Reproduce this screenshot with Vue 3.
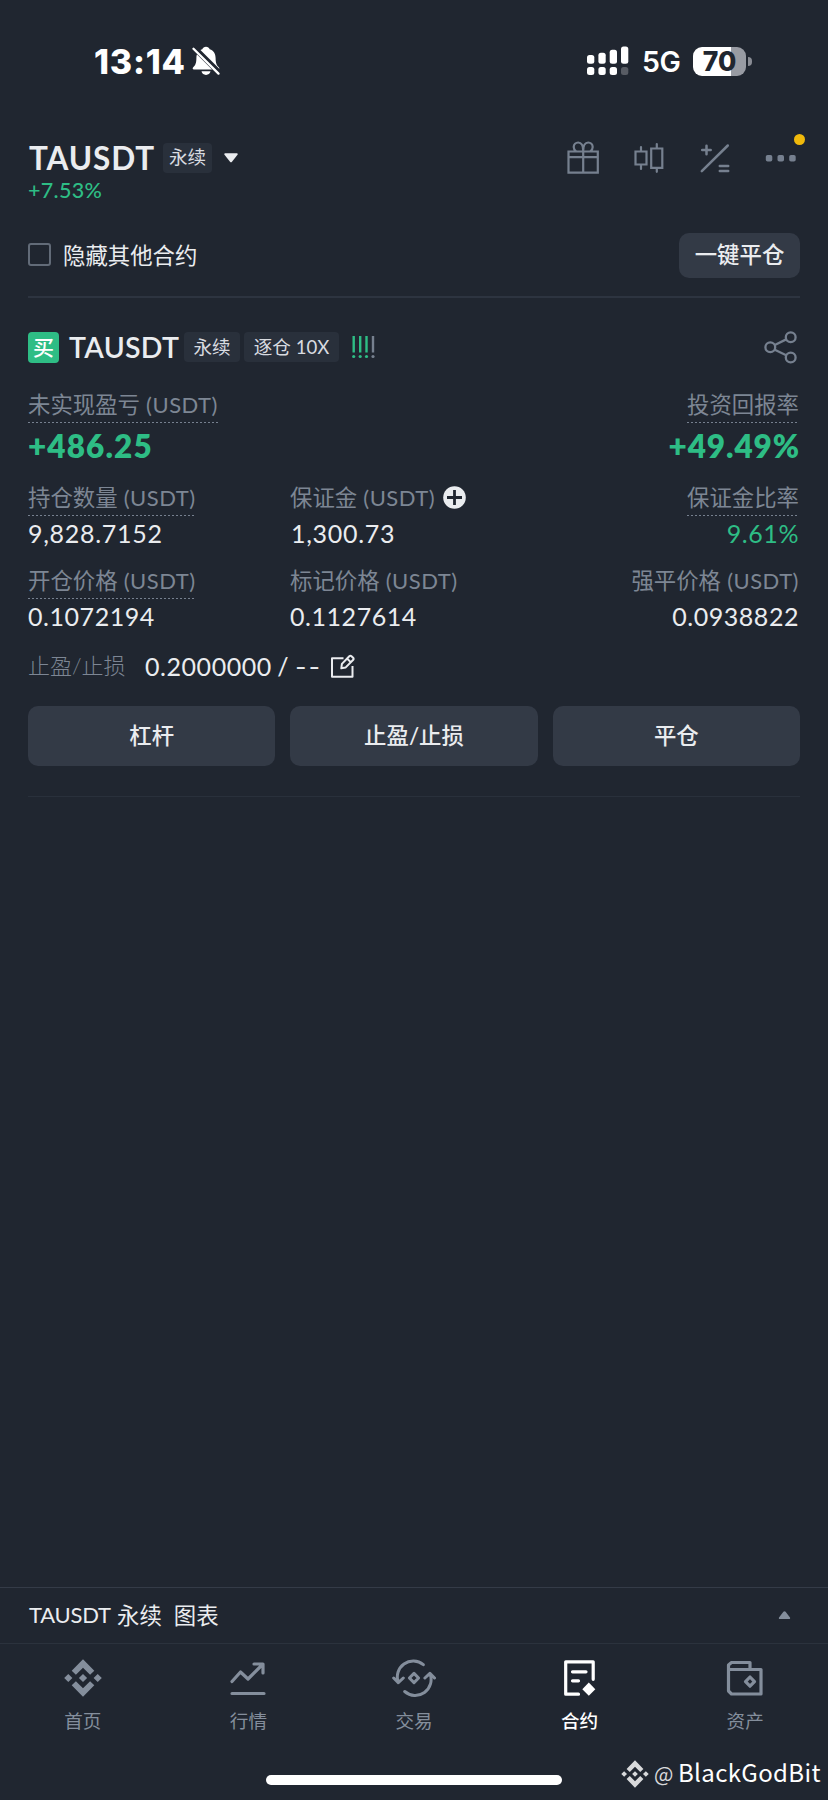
<script setup>
const tabs = [
  { id: 'home', label: '首页' },
  { id: 'market', label: '行情' },
  { id: 'trade', label: '交易' },
  { id: 'futures', label: '合约', active: true },
  { id: 'wallet', label: '资产' },
]
</script>

<template>
  <div class="screen">
    <div class="status">
      <span class="clock">13:14</span>
      <svg class="bell" width="28" height="30" viewBox="0 0 28 30">
        <path d="M14 .8c-1.8 0-3.2 1-3.7 2.500C6.300 4.600 4.400 8 4.400 12c0 5-1.100 7.500-3.200 9.300-.8.700-.9 2.200.8 2.200h24c1.700 0 1.600-1.500.8-2.200-2.100-1.800-3.200-4.300-3.200-9.300 0-4-1.900-7.400-5.900-8.700C17.200 1.800 15.800.8 14 .8z" fill="#fff"/>
        <path d="M9.500 25.300h9c-.4 2.200-2.200 3.600-4.500 3.600s-4.100-1.400-4.500-3.600z" fill="#fff"/>
        <path d="M2.500 2l25 25" stroke="#202630" stroke-width="5.500"/>
        <path d="M1.500 2.800l25 24.800" stroke="#fff" stroke-width="2.300" stroke-linecap="round"/>
      </svg>
      <svg class="signal" width="42" height="30" viewBox="0 0 42 30" fill="#fff">
        <rect x="0" y="9" width="7.300" height="8.800" rx="2.500"/><rect x="11.400" y="6.700" width="7.300" height="11.100" rx="2.500"/>
        <rect x="22.700" y="3.700" width="7.300" height="14.100" rx="2.500"/><rect x="34" y=".5" width="7.300" height="17.300" rx="2.500"/>
        <rect x="0" y="21" width="7.300" height="8" rx="2.500"/><rect x="11.400" y="21" width="7.300" height="8" rx="2.500"/>
        <rect x="22.700" y="21" width="7.300" height="8" rx="2.500"/><rect x="34" y="21" width="7.300" height="8" rx="2.500" opacity=".25"/>
      </svg>
      <span class="net">5G</span>
      <div class="battery"><span>70</span></div>
      <i class="nub"></i>
    </div>

    <header class="head">
      <div class="pair">
        <div class="pair-row">
          <span class="symbol">TAUSDT</span>
          <span class="tag">永续</span>
          <svg class="caret" width="16" height="12" viewBox="0 0 16 12"><path d="M2.200 1.200h11.600c1 0 1.200.8.700 1.500L9 9.800c-.6.700-1.400.7-2 0L1.500 2.700C1 2 1.200 1.200 2.200 1.200z" fill="#eaecef"/></svg>
        </div>
        <div class="change">+7.53%</div>
      </div>
      <svg class="tools" width="232" height="34" viewBox="0 0 232 34" fill="none" stroke="#76808f" stroke-width="2.200">
        <path d="M1.500 11.500h29.300v21.200H1.500zM1.500 17.200h29.300M16.200 11.500v21.200M16.200 10.500c0-5-2-8-5-8a4.600 4.600 0 0 0-4.500 4.500c0 2 1 3.500 2.500 4.500M16.200 10.500c0-5 2-8 5-8A4.600 4.600 0 0 1 25.700 7c0 2-1 3.500-2.500 4.500"/>
        <path d="M68.500 11.500h11v13h-11zM74 7v4.500M74 24.500v4.500M84.200 8.500h11.100v19.300H84.200zM89.800 4v4.500M89.800 27.800v4" stroke-linecap="round"/>
        <path d="M160.800 5.500l-26 25.700M135.200 10h8.500M139.500 5.700v8.600M152.800 26h8.400M152.800 31h8.400" stroke-width="2.500" stroke-linecap="round"/>
        <g fill="#76808f" stroke="none"><rect x="198.800" y="15" width="6.500" height="6.500" rx="1.800"/><rect x="210.500" y="15" width="6.500" height="6.500" rx="1.800"/><rect x="222.200" y="15" width="6.500" height="6.500" rx="1.800"/></g>
      </svg>
      <i class="dot"></i>
    </header>

    <div class="filter">
      <i class="box"></i>
      <span class="hide">隐藏其他合约</span>
      <button class="close-all">一键平仓</button>
    </div>

    <section class="card">
      <div class="title">
        <span class="buy">买</span>
        <span class="name">TAUSDT</span>
        <span class="tag t1">永续</span>
        <span class="tag t2">逐仓 <b>10X</b></span>
        <svg class="risk" width="24" height="24" viewBox="0 0 24 24" fill="#2ebd85">
          <path d="M.5 1h2.400v16.500H.5zM7 1h2.400v16.500H7zM13.300 1h2.400v16.500h-2.400z"/><circle cx="1.700" cy="21.500" r="1.600"/><circle cx="8.200" cy="21.500" r="1.600"/><circle cx="14.500" cy="21.500" r="1.600"/>
          <g fill="#76808f"><path d="M19.800 1h2.400v16.500h-2.400z"/><circle cx="21" cy="21.500" r="1.600"/></g>
        </svg>
        <svg class="share" width="33" height="33" viewBox="0 0 33 33" fill="none" stroke="#76808f" stroke-width="2.300"><circle cx="6.300" cy="16.300" r="4.900"/><circle cx="26.700" cy="6.200" r="4.900"/><circle cx="26.700" cy="26.500" r="4.900"/><path d="M10.800 14l11.400-5.600M10.800 18.700l11.400 5.500"/></svg>
      </div>

      <div class="row pnl">
        <div><div class="label"><u>未实现盈亏<em> (USDT)</em></u></div><div class="big">+486.25</div></div>
        <div class="right"><div class="label"><u>投资回报率</u></div><div class="big roi">+49.49%</div></div>
      </div>
      <div class="row three r2">
        <div><div class="label"><u>持仓数量<em> (USDT)</em></u></div><div class="val v1">9,828.7152</div></div>
        <div><div class="label">保证金<em> (USDT)</em><svg class="plus" width="23" height="23" viewBox="0 0 23 23"><circle cx="11.500" cy="11.500" r="11.300" fill="#eaecef"/><path d="M11.500 4v15M4 11.500h15" stroke="#202630" stroke-width="2.800"/></svg></div><div class="val v2">1,300.73</div></div>
        <div class="right"><div class="label"><u>保证金比率</u></div><div class="val green">9.61%</div></div>
      </div>
      <div class="row three r3">
        <div><div class="label"><u>开仓价格<em> (USDT)</em></u></div><div class="val">0.1072194</div></div>
        <div><div class="label">标记价格<em> (USDT)</em></div><div class="val">0.1127614</div></div>
        <div class="right"><div class="label">强平价格<em> (USDT)</em></div><div class="val">0.0938822</div></div>
      </div>
      <div class="tpsl">
        <span class="label">止盈/止损</span><span class="val tp">0.2000000 / <span class="dash">--</span></span>
        <svg class="edit" width="25" height="25" viewBox="0 0 25 25" fill="none" stroke="#eaecef" stroke-width="2" stroke-linejoin="round"><path d="M13.500 4.200H2v18.500h20.500V12"/><path d="M11.300 14.300l.6-4.400L19.300 2.300c.8-.8 1.500-.8 2.200-.1l1.600 1.600c.7.700.7 1.400-.1 2.200l-7.500 7.600zM17.300 4.700l3.400 3.400"/></svg>
      </div>
      <div class="actions"><button>杠杆</button><button>止盈/止损</button><button>平仓</button></div>
    </section>

    <div class="chart"><span class="cname">TAUSDT</span><span class="cjk">永续</span><span class="cjk ctext">图表</span><svg width="13" height="10" viewBox="0 0 13 10"><path d="M2 9h9c1.200 0 1.500-1 .8-1.800L7.600 1.800c-.7-.8-1.500-.8-2.200 0L1.200 7.200C.5 8 .8 9 2 9z" fill="#848e9c"/></svg></div>

    <nav class="nav">
      <div v-for="t in tabs" :key="t.id" class="tab" :class="{ on: t.active }">
        <svg width="44" height="40" viewBox="-2 0 44 40" fill="none" stroke="currentColor" stroke-width="3.200" stroke-linecap="round" stroke-linejoin="round">
          <g v-if="t.id === 'home'" fill="currentColor" stroke="none"><path d="M20 1.300l11.300 11.400-4.200 4.100L20 9.700l-7.100 7.100-4.200-4.100zM20 38.700L8.700 27.300l4.200-4.100 7.100 7.100 7.100-7.100 4.200 4.100zM20 15.900l4.100 4.100-4.100 4.100-4.100-4.100zM5.300 15.900L9.400 20l-4.100 4.100L1.200 20zM34.700 15.900l4.100 4.100-4.100 4.100-4.100-4.100z"/></g>
          <g v-else-if="t.id === 'market'"><path d="M4 23.500l8.500-9.500 7.500 7L34.500 6.500M26 6h9v9M4 35.500h32"/></g>
          <g v-else-if="t.id === 'trade'" stroke-width="3"><path d="M4.300 24.500A15.900 15.900 0 0 1 29.300 6.700M-.3 20l4.600 4.700 5-4.700M10.700 33.500A15.900 15.900 0 0 0 35.900 15.500M30.900 20l5-4.700 4.600 4.700"/><path d="M20 15.400l4.600 4.600-4.600 4.600-4.600-4.600z"/></g>
          <g v-else-if="t.id === 'futures'"><path d="M18.500 36.200H5.700V3.800h27.500v17.500M12.500 13.800h13.500M12.500 22.800h6"/><path d="M28.800 24.600l6.500 6.700-6.500 6.500-6.500-6.500z" fill="currentColor" stroke="none"/></g>
          <g v-else><path d="M3.500 11v22l3 3h29.500V11.500H3.500V7l3-2.500h18.500v7"/><path d="M25 19l4.500 4.700-4.500 4.500-4.500-4.500z"/></g>
        </svg>
        <span>{{ t.label }}</span>
      </div>
    </nav>
    <div class="home-bar"></div>
    <div class="mark">
      <svg width="28" height="28" viewBox="0 0 40 40" fill="#d8d9db"><path d="M20 .5l12 12.200-4.500 4.400L20 9.700l-7.500 7.400L8 12.700zM20 39.500L8 27.300l4.500-4.400 7.500 7.400 7.500-7.400 4.500 4.400zM20 15.900l4.100 4.100-4.100 4.100-4.100-4.100zM4.500 15.900L8.600 20l-4.100 4.100L.4 20zM35.500 15.900l4.100 4.100-4.100 4.100-4.100-4.100z"/></svg>
      <span class="at">@</span><span class="user">BlackGodBit</span>
    </div>
  </div>
</template>

<style>
body { margin: 0; background: #202630; }
</style>

<style scoped>
* { box-sizing: border-box; }
.screen { position: relative; width: 828px; height: 1800px; overflow: hidden; background: #202630; color: #eaecef; font-family: Lato, "Noto Sans CJK SC", sans-serif; display: flex; flex-direction: column; white-space: nowrap; }
i, em, u, b { font-style: normal; text-decoration: none; font-weight: inherit; }
svg { display: block; flex: none; }
button { border: 0; padding: 0; background: #333a46; color: #eaecef; font: 500 22.400px/1 Lato, "Noto Sans CJK SC", sans-serif; border-radius: 10px; }
.status { height: 122px; display: flex; align-items: center; padding-left: 94px; color: #fff; font-family: Inter, sans-serif; }
.clock { width: 98px; font-size: 34px; font-weight: 800; line-height: 40px; letter-spacing: .8px; padding-top: 1px; }
.signal { margin-left: 367px; }
.net { width: 51px; margin-left: 13px; font-size: 28.500px; font-weight: 600; letter-spacing: -.3px; }
.battery { width: 53px; height: 29px; border-radius: 9px; background: linear-gradient(90deg, #fff 71%, #989ba3 71%); color: #202630; text-align: center; font-size: 26.500px; line-height: 28px; font-weight: 800; }
.nub { width: 4px; height: 9px; margin-left: 2px; border-radius: 0 4px 4px 0; background: #898c94; }
.head { height: 91px; padding: 20px 28px 0; display: flex; justify-content: space-between; position: relative; }
.pair-row { height: 32px; display: flex; align-items: center; }
.symbol { width: 134px; margin-left: 1px; font-size: 31.500px; font-weight: 700; line-height: 38px; letter-spacing: .9px; }
.tag { background: #29303b; border-radius: 4px; height: 30px; line-height: 29px; font-size: 18.600px; text-align: center; color: #d8dbe0; }
.pair .tag { width: 49px; }
.title .tag { line-height: 30px; }
.caret { margin-left: 11px; }
.change { font-size: 21.500px; line-height: 26px; margin-top: 3px; color: #2ebd85; letter-spacing: .3px; font-weight: 500; }
.tools { margin-right: 1px; margin-top: -2px; }
.dot { position: absolute; left: 794px; top: 12px; width: 11px; height: 11px; border-radius: 50%; background: #f0b90b; }
.filter { height: 85px; margin: 0 28px; border-bottom: 2px solid #2d3440; display: flex; align-items: center; }
.box { width: 23px; height: 23px; border: 2px solid #626b78; border-radius: 3px; }
.hide { font-size: 22.400px; margin-left: 12px; padding-bottom: 2px; }
.close-all { width: 121px; height: 45px; margin: 2px 0 0 auto; }
.card { margin: 0 28px; height: 499px; border-bottom: 1px solid #29303b; padding-top: 33px; }
.title { display: flex; align-items: center; height: 32px; }
.buy { width: 31px; height: 31px; background: #2ebd85; border-radius: 4px; font-size: 21px; line-height: 29px; text-align: center; color: #fff; font-weight: 500; }
.name { margin-left: 10px; width: 115px; font-size: 28.500px; font-weight: 600; line-height: 32px; letter-spacing: .3px; }
.t1 { width: 56px; }
.t2 { width: 95px; margin-left: 4px; }
.risk { margin-left: 13px; }
.share { margin-left: auto; margin-right: 3px; }
.label { color: #7d8694; font-size: 22.400px; height: 34px; line-height: 31px; display: flex; font-weight: 400; }
.label u { display: block; height: 34px; white-space: pre; background: repeating-linear-gradient(90deg, #76808f 0 2px, transparent 2px 4px) bottom / 100% 1px no-repeat; }
.label em { font-size: 22px; font-weight: 400; letter-spacing: .5px; white-space: pre; }
.row { display: flex; justify-content: space-between; }
.three { display: grid; grid-template-columns: 262px 262px 1fr; }
.right { display: flex; flex-direction: column; align-items: flex-end; padding-right: 1px; }
.pnl { margin-top: 26px; height: 93px; }
.big { color: #2ebd85; font-size: 31.500px; line-height: 46px; font-weight: 800; letter-spacing: 1.100px; }
.roi { margin-right: -1px; letter-spacing: .9px; }
.r2 { height: 83px; }
.r3 { height: 83px; }
.val { font-size: 25px; line-height: 34px; letter-spacing: .55px; color: #eaecef; }
.v1, .v2 { letter-spacing: .7px; }
.v2 { padding-left: 1px; }
.green { color: #2ebd85; }
.plus { margin: 4px 0 0 8px; }
.tpsl { display: flex; height: 36px; align-items: center; }
.tpsl .label { height: 32px; width: 117px; font-size: 22px; font-weight: 300; }
.tp { word-spacing: -1.500px; }
.dash { display: inline-block; transform: scaleX(1.250); transform-origin: left; letter-spacing: 1.500px; }
.edit { margin-left: 14px; }
.actions { display: grid; grid-template-columns: repeat(3, 1fr); gap: 15px; margin-top: 22px; }
.actions button { height: 60px; }
.chart { margin-top: auto; height: 57px; flex: none; border-top: 1px solid #343b47; border-bottom: 1px solid #2b323d; padding: 0 37px 2px 29px; display: flex; align-items: center; font-size: 22.400px; }
.cname { width: 88px; font-size: 22px; letter-spacing: -.2px; }
.cjk { padding-bottom: 2px; }
.ctext { margin-left: 12px; }
.chart svg { margin-left: auto; }
.nav { height: 156px; flex: none; display: grid; grid-template-columns: repeat(5, 1fr); }
.tab { color: #848e9c; display: flex; flex-direction: column; align-items: center; padding-top: 14px; font-size: 18.600px; }
.tab span { line-height: 26px; margin-top: 10px; }
.on { color: #fff; }
.on span { font-weight: 500; }
.home-bar { position: absolute; left: 266px; top: 1775px; width: 296px; height: 10px; border-radius: 5px; background: #fff; }
.mark { position: absolute; left: 621px; top: 1758px; height: 32px; display: flex; align-items: center; font-family: "Noto Sans CJK SC", sans-serif; font-size: 24px; color: #fff; font-weight: 400; }
.at { width: 24px; margin-left: 5px; font-size: 20.500px; color: #d8d9db; padding-bottom: 3px; }
.user { padding-bottom: 5px; letter-spacing: .35px; }
</style>
